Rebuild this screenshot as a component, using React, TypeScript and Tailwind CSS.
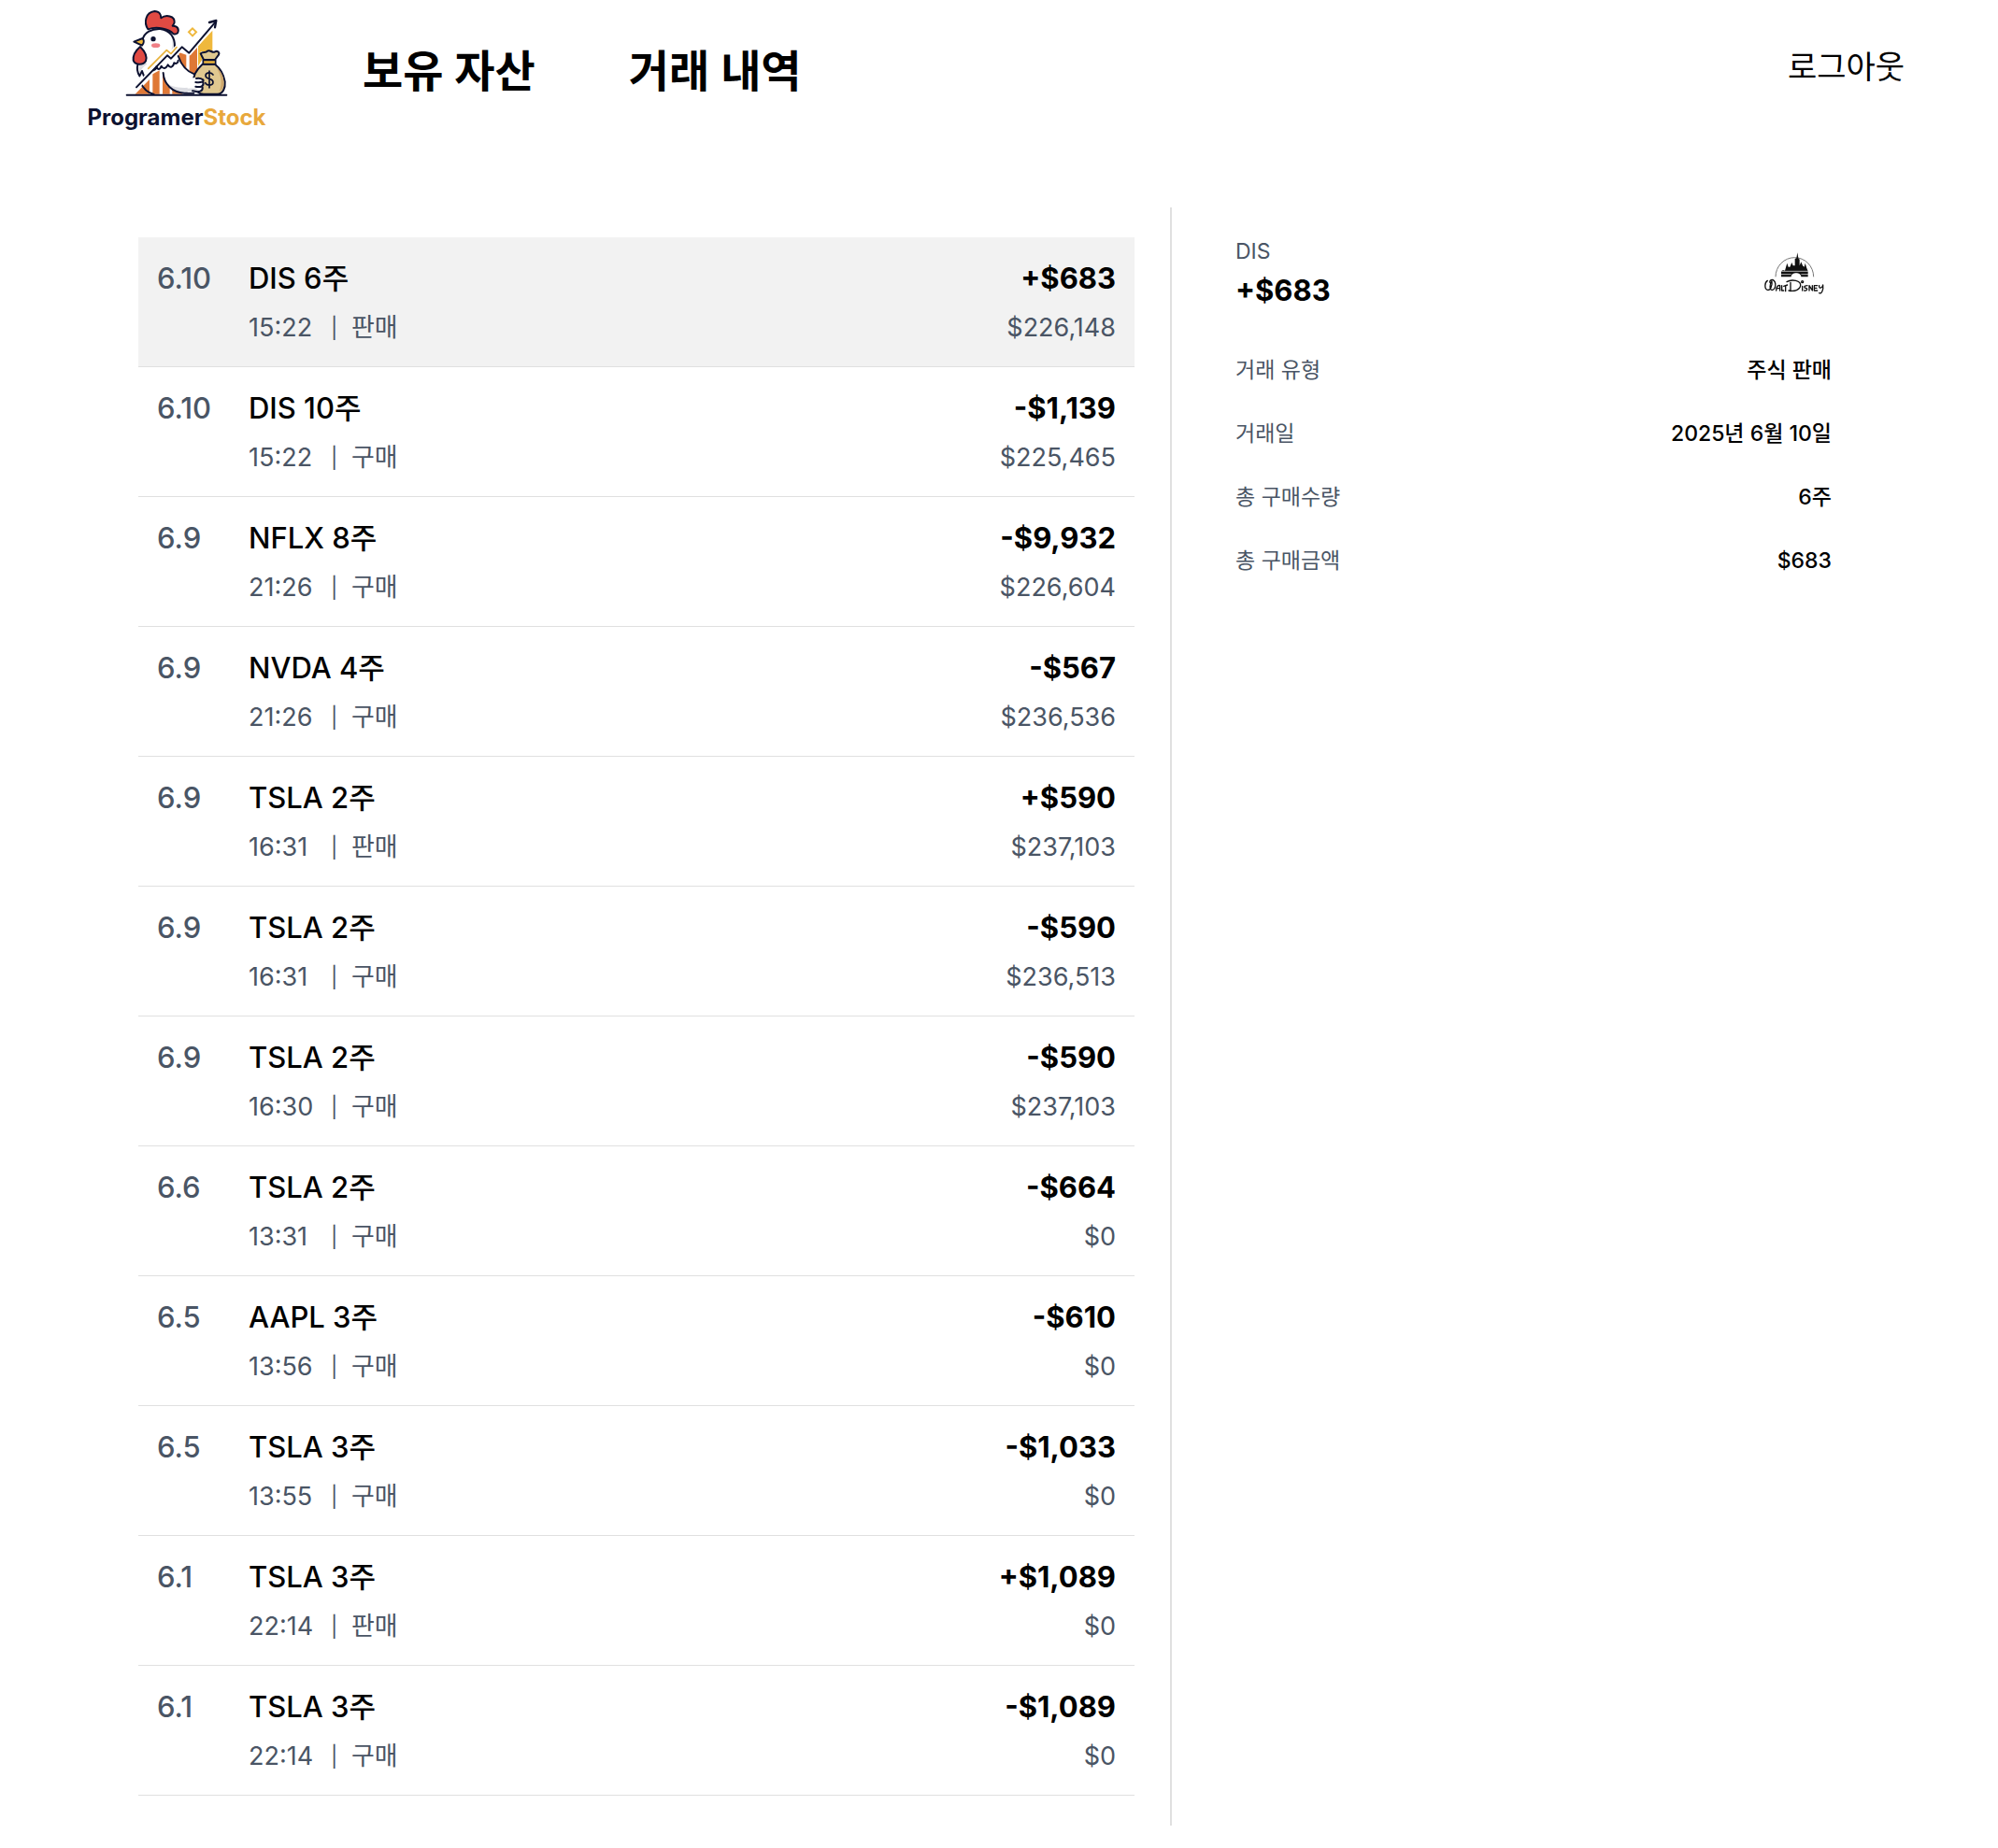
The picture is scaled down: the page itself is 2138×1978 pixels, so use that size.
import React from "react";

type Trade = {
  date: string;
  name: string;
  time: string;
  kind: string;
  amount: string;
  balance: string;
};

const trades: Trade[] = [
  { date: "6.10", name: "DIS 6주", time: "15:22", kind: "판매", amount: "+$683", balance: "$226,148" },
  { date: "6.10", name: "DIS 10주", time: "15:22", kind: "구매", amount: "-$1,139", balance: "$225,465" },
  { date: "6.9", name: "NFLX 8주", time: "21:26", kind: "구매", amount: "-$9,932", balance: "$226,604" },
  { date: "6.9", name: "NVDA 4주", time: "21:26", kind: "구매", amount: "-$567", balance: "$236,536" },
  { date: "6.9", name: "TSLA 2주", time: "16:31", kind: "판매", amount: "+$590", balance: "$237,103" },
  { date: "6.9", name: "TSLA 2주", time: "16:31", kind: "구매", amount: "-$590", balance: "$236,513" },
  { date: "6.9", name: "TSLA 2주", time: "16:30", kind: "구매", amount: "-$590", balance: "$237,103" },
  { date: "6.6", name: "TSLA 2주", time: "13:31", kind: "구매", amount: "-$664", balance: "$0" },
  { date: "6.5", name: "AAPL 3주", time: "13:56", kind: "구매", amount: "-$610", balance: "$0" },
  { date: "6.5", name: "TSLA 3주", time: "13:55", kind: "구매", amount: "-$1,033", balance: "$0" },
  { date: "6.1", name: "TSLA 3주", time: "22:14", kind: "판매", amount: "+$1,089", balance: "$0" },
  { date: "6.1", name: "TSLA 3주", time: "22:14", kind: "구매", amount: "-$1,089", balance: "$0" },
];

const details = [
  { label: "거래 유형", value: "주식 판매" },
  { label: "거래일", value: "2025년 6월 10일" },
  { label: "총 구매수량", value: "6주" },
  { label: "총 구매금액", value: "$683" },
];

function HenLogo() {
  return (
    <svg viewBox="154 24 342 288" className="h-24 w-[114px]" fill="none" strokeLinecap="round" strokeLinejoin="round" aria-hidden="true">
      {/* chart bars */}
      <path d="M192 302 L238 255 V302 Z" fill="#df7836" />
      <path d="M248 238 L270 226 V302 H248 Z" fill="#df7836" />
      <path d="M280 232 L303 262 V302 H280 Z" fill="#df7836" />
      <path d="M311 275 L345 302 H311 Z" fill="#df7836" />
      <path d="M332 168 L356 176 V224 L332 196 Z" fill="#df7836" />
      <path d="M366 176 L391 152 V228 L384 238 L366 232 Z" fill="#df7836" />
      <path d="M394 148 L440 98 V166 H402 L408 190 L394 212 Z" fill="#efb83c" />
      {/* body */}
      <path d="M203 238 C198 215 206 195 212 180 C216 160 214 140 218 122 C226 100 250 90 275 93 C305 97 322 122 320 150 L322 178 L340 200 L318 208 L300 216 L283 222 L262 226 L240 236 L218 250 Z" fill="#fff" />
      <path d="M300 104 C314 122 314 146 308 160 L319 152 C320 130 312 112 300 104 Z" fill="#dcdde2" />
      <path d="M226 200 C220 206 210 210 204 210 C202 222 204 230 207 236 C210 222 220 212 230 206 Z" fill="#dcdde2" />
      <path d="M281 234 C282 268 308 296 345 298 L400 296 L412 262 L388 240 L352 222 L328 196 L300 212 Z" fill="#fff" />
      <path d="M288 262 C306 282 336 284 384 280 L392 296 H345 C315 296 292 280 288 262 Z" fill="#dcdde2" />
      {/* comb */}
      <path d="M233 94 C219 72 225 40 254 36 C270 36 275 48 275 58 C290 46 320 50 318 72 C316 78 314 80 312 83 C328 82 334 94 328 106 C324 110 320 110 315 109 C300 92 262 84 233 94 Z" fill="#e04a43" stroke="#0c1130" strokeWidth="6" />
      <path d="M216 126 C222 104 244 92 272 93 C304 97 320 120 319 150" stroke="#0c1130" strokeWidth="6" />
      {/* beak and wattle */}
      <path d="M216 123 L188 134 L214 146 C220 140 221 130 216 123 Z" fill="#efb83c" stroke="#0c1130" strokeWidth="6" />
      <path d="M208 150 C194 162 184 178 186 194 C192 210 218 210 226 196 C232 180 222 164 208 150 Z" fill="#e04a43" stroke="#0c1130" strokeWidth="6" />
      <path d="M200 208 C196 222 200 234 206 244 L214 228 L220 244" stroke="#0c1130" strokeWidth="6" />
      <circle cx="250" cy="125" r="8" fill="#0c1130" />
      <ellipse cx="258" cy="146" rx="14" ry="7" fill="#f08087" />
      {/* belly and wing */}
      <path d="M208 262 C218 286 232 298 252 303" stroke="#0c1130" strokeWidth="6" />
      <path d="M282 234 C284 270 310 296 350 299 H380" stroke="#0c1130" strokeWidth="6" />
      <path d="M330 180 C342 214 364 232 382 238 C396 244 404 248 410 254" stroke="#0c1130" strokeWidth="6" />
      {/* money bag */}
      <path d="M408 206 C388 224 376 244 378 268 C388 290 392 302 412 302 H456 C474 302 482 282 480 262 C476 238 466 220 448 206 Z" fill="#e0c890" stroke="#0c1130" strokeWidth="6" />
      <path d="M454 220 C466 238 474 266 462 294 C478 286 478 262 474 248 C468 230 460 224 454 220 Z" fill="#cda66c" />
      <path d="M412 192 L402 172 C410 164 418 172 424 164 C432 158 440 172 448 166 C456 162 464 168 460 176 L448 192 Z" fill="#e0c890" stroke="#0c1130" strokeWidth="6" />
      <path d="M410 193 H450 V206 H410 Z" fill="#efb83c" stroke="#0c1130" strokeWidth="5" />
      <path d="M442 240 C436 230 418 232 418 243 C418 256 442 250 442 264 C442 276 422 276 417 266 M430 228 V282" stroke="#0c1130" strokeWidth="5" />
      <path d="M376 250 C390 250 402 250 410 258 C416 268 410 288 398 296 L360 296 V270 Z" fill="#fff" />
      <path d="M350 284 C366 285 380 283 390 284 L396 294 H350 Z" fill="#dcdde2" />
      <path d="M388 252 C396 250 404 252 410 256 C414 262 404 266 386 264 M410 264 C414 276 402 282 386 278 M408 280 C410 292 398 298 376 292" stroke="#0c1130" strokeWidth="6" />
      {/* trend lines */}
      <path d="M234 220 L293 161 L307 173 L325 152" stroke="#fff" strokeWidth="12" />
      <path d="M234 220 L293 161 L307 173 L325 152" stroke="#e8b23c" strokeWidth="5" />
      <path d="M196 280 L295 178 L307 188 L342 151 L365 170 L446 74" stroke="#fff" strokeWidth="16" strokeLinecap="butt" />
      <path d="M250 226 C256 224 260 220 261 213 C264 226 272 224 276 212 C282 222 290 222 297 208 C304 220 314 216 317 202 C324 206 330 202 330 194" stroke="#0c1130" strokeWidth="6" />
      <path d="M196 280 L295 178 L307 188 L342 151 L365 170 L450 70" stroke="#0c1130" strokeWidth="6" />
      <path d="M430 72 L452 66 L448 88" stroke="#0c1130" strokeWidth="7" />
      <path d="M376 91 L388 103 L376 115 L364 103 Z" stroke="#efb83c" strokeWidth="6" strokeLinejoin="miter" />
      <path d="M165 305 H485" stroke="#0c1130" strokeWidth="6" />
    </svg>
  );
}

function CastleLogo() {
  return (
    <svg viewBox="0 0 192 144" className="h-12 w-16" role="img" aria-label="Walt Disney">
      <path d="M36 82 A61 62 0 0 1 158 82" fill="none" stroke="#777" strokeWidth="3" />
      <path
        d="M54 82 V64 L60 60 L66 62 L70 48 L73 38 L77 50 H82 L88 36 L92 46 H98 V24 L103 22 L106 4 L109 22 L113 26 V46 L118 34 L123 46 L128 50 L131 38 L136 54 L140 64 V82 H118 C118 66 86 66 86 82 Z"
        fill="#111"
      />
      <path d="M52 64 H142 M52 74 H86 M118 74 H142" stroke="#fff" strokeWidth="2" />
      <g fill="none" stroke="#111" strokeWidth="4" strokeLinecap="round" strokeLinejoin="round">
        <path d="M10 94 C0 100 0 122 10 124 C20 126 26 108 24 96 C16 104 16 126 26 124 C36 122 40 100 28 92 C20 90 16 96 18 100" />
        <path d="M38 126 C38 112 46 108 50 110 V126 M40 119 H50 M56 110 V126 H62 M62 112 L74 108 M68 110 V128" />
        <path d="M84 100 V128 M72 98 C88 88 118 94 116 110 C114 124 96 130 78 126" />
        <path d="M122 112 V126 M138 110 C126 110 126 118 134 118 C140 120 136 128 128 126 M144 126 V110 L154 126 V110 M170 110 H160 V126 H170 M160 118 H168 M176 110 C174 120 186 120 188 108 C190 124 184 138 176 134" />
        <circle cx="122" cy="98" r="3" />
      </g>
    </svg>
  );
}

export default function App() {
  return (
    <div className="min-h-screen bg-white font-['Inter','Noto_Sans_CJK_KR',sans-serif] text-black">
      <header className="flex items-start justify-between pt-2 pr-[100px] pl-[94px]">
        <div className="flex items-start">
          <a href="#home" className="flex w-[190px] flex-col items-center">
            <HenLogo />
            <span className="text-2xl leading-[44px] font-bold whitespace-nowrap text-[#0c1130]">
              Programer<span className="text-[#e8a83c]">Stock</span>
            </span>
          </a>
          <nav className="flex gap-[100px] pt-9 pl-[104px] text-[47px] leading-[64px] font-semibold whitespace-nowrap">
            <a href="#assets">보유 자산</a>
            <a href="#trades">거래 내역</a>
          </nav>
        </div>
        <button type="button" className="pt-10 text-[34px] leading-[48px]">
          로그아웃
        </button>
      </header>

      <main className="grid grid-cols-[92fr_59fr] pt-[74px] pr-[178px] pb-6 pl-[148px]">
        <ul className="pt-8 pr-[38px] pb-8">
          {trades.map((t, i) => (
            <li key={i} className="border-b border-[#e0e0e0]">
              <button
                type="button"
                className={`flex w-full items-start px-5 pt-5 pb-[21px] text-left ${i === 0 ? "bg-[#f2f2f2]" : "bg-white"}`}
              >
                <span className="w-[98px] text-[31px] leading-[48px] font-medium text-gray-600">{t.date}</span>
                <span className="flex grow flex-col gap-[9px]">
                  <span className="text-[31px] leading-[48px] font-medium">{t.name}</span>
                  <span className="flex text-[27px] leading-10 text-gray-600">
                    <span className="w-[88px]">{t.time}</span>
                    <span className="w-[22px] text-[22px]">|</span>
                    <span>{t.kind}</span>
                  </span>
                </span>
                <span className="flex flex-col gap-[9px] text-right">
                  <span className="text-[31px] leading-[48px] font-bold">{t.amount}</span>
                  <span className="text-[27px] leading-10 text-gray-600">{t.balance}</span>
                </span>
              </button>
            </li>
          ))}
        </ul>

        <aside className="border-l-2 border-[#e0e0e0] pt-[29px] pl-[68px]">
          <div className="flex items-center justify-between">
            <div>
              <p className="text-[23px] leading-9 text-gray-600">DIS</p>
              <h2 className="text-[31px] leading-[48px] font-bold">+$683</h2>
            </div>
            <div className="pr-2">
              <CastleLogo />
            </div>
          </div>
          <dl className="flex flex-col gap-8 pt-[43px]">
            {details.map((d) => (
              <div key={d.label} className="flex justify-between text-[23px] leading-9">
                <dt className="text-gray-600">{d.label}</dt>
                <dd className="font-medium">{d.value}</dd>
              </div>
            ))}
          </dl>
        </aside>
      </main>
    </div>
  );
}
